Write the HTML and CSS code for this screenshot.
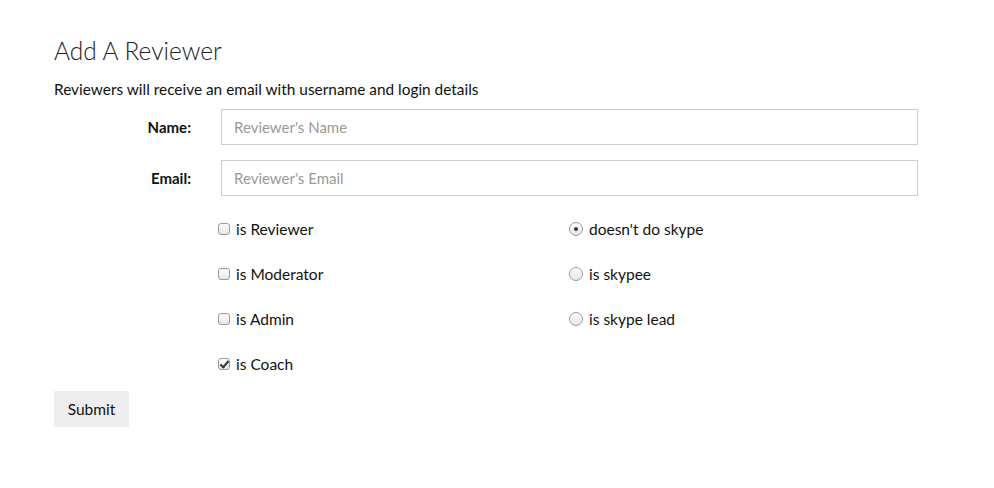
FILE: index.html
```html
<!DOCTYPE html>
<html>
<head>
<meta charset="utf-8">
<link rel="stylesheet" href="styles.css">
</head>
<body>
<div class="page">
  <h1 class="title">Add A Reviewer</h1>
  <p class="intro">Reviewers will receive an email with username and login details</p>
  <form class="form">
    <div class="field">
      <label class="field-label">Name:</label>
      <input class="field-input" type="text" placeholder="Reviewer's Name">
    </div>
    <div class="field">
      <label class="field-label">Email:</label>
      <input class="field-input" type="text" placeholder="Reviewer's Email">
    </div>
    <div class="options">
      <div class="option-col">
        <label class="option"><input class="check" type="checkbox"><span>is Reviewer</span></label>
        <label class="option"><input class="check" type="checkbox"><span>is Moderator</span></label>
        <label class="option"><input class="check" type="checkbox"><span>is Admin</span></label>
        <label class="option"><input class="check" type="checkbox" checked><span>is Coach</span></label>
      </div>
      <div class="option-col">
        <label class="option"><input class="radio" type="radio" name="skype" checked><span>doesn't do skype</span></label>
        <label class="option"><input class="radio" type="radio" name="skype"><span>is skypee</span></label>
        <label class="option"><input class="radio" type="radio" name="skype"><span>is skype lead</span></label>
      </div>
    </div>
    <button class="submit" type="button">Submit</button>
  </form>
</div>
</body>
</html>
```
FILE: styles.css
```css
* { box-sizing: border-box; }
body {
  margin: 0;
  font-family: Lato, "Open Sans", sans-serif;
  color: #111;
  background: #fff;
}
.page {
  padding: 33px 0 0 54px;
}
.title {
  margin: 0;
  font-size: 24.5px;
  font-weight: 300;
  line-height: 36px;
  color: #222;
}
.intro {
  margin: 10px 0 0;
  font-size: 15.4px;
  line-height: 20px;
}
.form {
  margin-top: 10px;
}
.field {
  display: grid;
  grid-template-columns: 137px 697px;
  column-gap: 30px;
  align-items: center;
  margin-bottom: 15px;
}
.field-label {
  text-align: right;
  font-weight: 700;
  font-size: 15px;
}
.field-input {
  height: 36px;
  border: 1px solid #ccc;
  padding: 0 12px;
  font-family: inherit;
  font-size: 15px;
  color: #333;
  outline: none;
}
.field-input::placeholder { color: #999; }
.options {
  display: flex;
  margin: -5px 0 0 164px;
}
.option-col {
  display: flex;
  flex-direction: column;
  width: 351px;
}
.option {
  display: flex;
  align-items: center;
  height: 45px;
  font-size: 15.5px;
}
.check, .radio {
  appearance: none;
  -webkit-appearance: none;
  margin: 0 6px 0 0;
  width: 12px;
  height: 12px;
  border: 1px solid #9a9a9a;
  background: linear-gradient(#fdfdfd, #e6e6e6);
  position: relative;
}
.check { border-radius: 3px; }
.check:checked::after {
  content: "";
  position: absolute;
  left: 3px;
  top: 0px;
  width: 3px;
  height: 7px;
  border: solid #333;
  border-width: 0 2px 2px 0;
  transform: rotate(40deg);
}
.radio {
  width: 14px;
  height: 14px;
  border-radius: 50%;
  margin: 0 6px 0 0;
}
.radio:checked::after {
  content: "";
  position: absolute;
  left: 4px;
  top: 4px;
  width: 4px;
  height: 4px;
  border-radius: 50%;
  background: #333;
}
.submit {
  margin-top: 5px;
  width: 75px;
  height: 36px;
  border: none;
  background: #eee;
  font-family: inherit;
  font-size: 15.5px;
  color: #111;
}
```
